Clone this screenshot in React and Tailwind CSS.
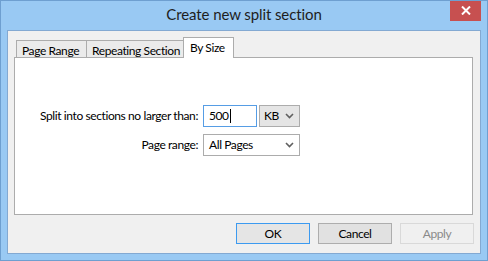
import React from "react";

const Chevron = () => (
  <svg width="9" height="6" viewBox="0 0 9 6" className="shrink-0">
    <path d="M1 1 L4.5 4.5 L8 1" fill="none" stroke="#606060" strokeWidth="1.6" />
  </svg>
);

export default function App() {
  const font = { fontFamily: 'Lato, "Noto Sans", sans-serif' };
  return (
    <div
      className="w-[488px] h-[261px] bg-[#99c9f3] border border-[#6e9fd0] flex flex-col text-[12px] tracking-[-0.4px] text-black overflow-hidden whitespace-nowrap"
      style={font}
    >
      {/* title bar */}
      <div className="relative h-[29px] shrink-0 flex items-center justify-center">
        <span className="text-[15px] tracking-[-0.1px] text-[#1e1e1e] leading-none mt-[-2px]">Create new split section</span>
        <div className="absolute right-[6px] top-[-1px] w-[31px] h-[21px] bg-[#c75050] flex items-center justify-center">
          <svg width="10" height="9" viewBox="0 0 10 9">
            <path d="M1 0.5 L9 8.5 M9 0.5 L1 8.5" stroke="white" strokeWidth="2" />
          </svg>
        </div>
      </div>
      {/* client */}
      <div className="ml-[6px] mr-[6px] h-[224px] bg-[#f0f0f0] border border-[#83a9d2] flex flex-col">
        <div className="pt-[6px] pl-[8px] h-[26px] flex items-end shrink-0">
          <div className="w-[71px] h-[17px] border border-b-0 border-[#acacac] bg-[#ebebeb] pl-[5px] pt-[2px] leading-[15px]">
            Page Range
          </div>
          <div className="w-[97px] h-[17px] border-t border-r border-[#acacac] bg-[#ebebeb] pl-[5px] pt-[2px] leading-[15px]">
            Repeating Section
          </div>
          <div className="relative z-10 -ml-px w-[51px] h-[21px] mb-[-1px] border border-b-0 border-[#acacac] bg-white pl-[6px] pt-[2px] leading-[15px]">
            By Size
          </div>
        </div>
        <div className="ml-[6px] mr-[7px] h-[158px] bg-white border border-[#acacac] pt-[47px]">
          <div className="flex items-center h-[22px]">
            <div className="w-[184px] text-right pr-[1px]">Split into sections no larger than:</div>
            <div className="ml-[4px] w-[54px] h-[22px] border border-[#569de5] flex items-center pl-[5px]">
              <span>500</span>
              <span className="w-px h-[14px] bg-black ml-[1px]" />
            </div>
            <div className="ml-[2px] w-[41px] h-[22px] border border-[#acacac] bg-[#e5e5e5] flex items-center justify-between pl-[4px] pr-[5px]">
              <span>KB</span>
              <Chevron />
            </div>
          </div>
          <div className="flex items-center h-[22px] mt-[7px]">
            <div className="w-[184px] text-right pr-[1px]">Page range:</div>
            <div className="ml-[4px] w-[97px] h-[22px] border border-[#acacac] bg-white flex items-center justify-between pl-[5px] pr-[5px]">
              <span>All Pages</span>
              <Chevron />
            </div>
          </div>
        </div>
        <div className="flex justify-end gap-[8px] pr-[6px] mt-[8px]">
          <div className="w-[74px] h-[21px] border border-[#3c9af0] bg-[#e5e5e5] flex items-center justify-center">OK</div>
          <div className="w-[74px] h-[21px] border border-[#adadad] bg-[#e1e1e1] flex items-center justify-center">Cancel</div>
          <div className="w-[74px] h-[21px] border border-[#d9d9d9] bg-[#f0f0f0] text-[#8a8a8a] flex items-center justify-center">Apply</div>
        </div>
      </div>
    </div>
  );
}
